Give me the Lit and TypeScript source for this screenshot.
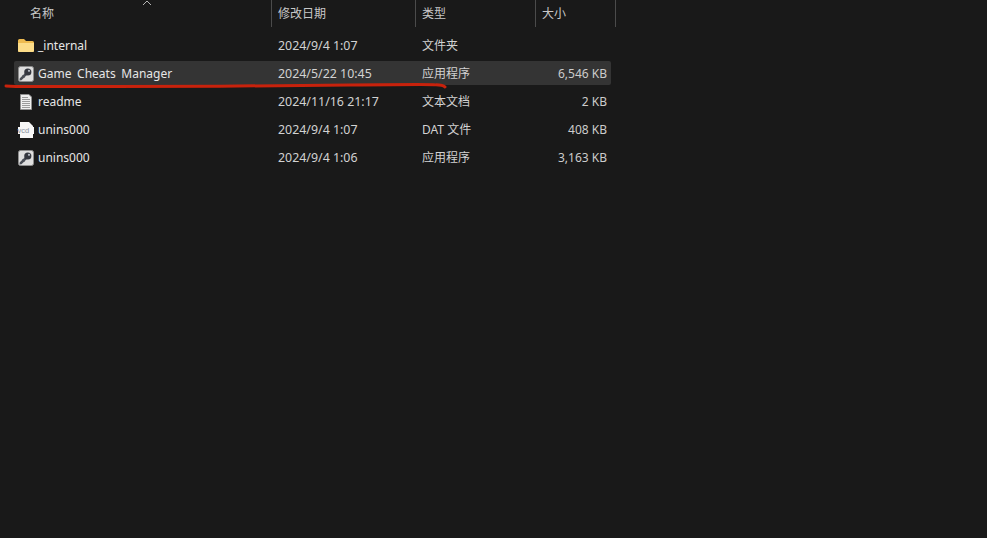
import { LitElement, css, html, svg } from "lit";
import { customElement } from "lit/decorators.js";

type Kind = "folder" | "app" | "text" | "dat";

interface FileRow {
  name: string;
  date: string;
  type: string;
  size: string;
  kind: Kind;
  selected?: boolean;
}

const rows: FileRow[] = [
  { name: "_internal", date: "2024/9/4 1:07", type: "文件夹", size: "", kind: "folder" },
  { name: "Game Cheats Manager", date: "2024/5/22 10:45", type: "应用程序", size: "6,546 KB", kind: "app", selected: true },
  { name: "readme", date: "2024/11/16 21:17", type: "文本文档", size: "2 KB", kind: "text" },
  { name: "unins000", date: "2024/9/4 1:07", type: "DAT 文件", size: "408 KB", kind: "dat" },
  { name: "unins000", date: "2024/9/4 1:06", type: "应用程序", size: "3,163 KB", kind: "app" },
];

const icons: Record<Kind, unknown> = {
  folder: svg`
    <path d="M1 3.5Q1 2 2.5 2H7L9 4H15.5Q17 4 17 5.5V13.5Q17 15 15.5 15H2.5Q1 15 1 13.5Z" fill="#eebb50"/>
    <path d="M1 6H17V13.5Q17 15 15.5 15H2.5Q1 15 1 13.5Z" fill="#fcdc88"/>`,
  app: svg`
    <rect x="1.5" y="1.5" width="15" height="15" rx="2" fill="#dedede" stroke="#8c8c8c"/>
    <path d="M3.8 14.2L9 9" stroke="#4a4e57" stroke-width="2.6" stroke-linecap="round"/>
    <path d="M5.5 10.5L7.5 12.5" stroke="#4a4e57" stroke-width="1.4"/>
    <circle cx="10.8" cy="7" r="3.6" fill="#34373f"/>
    <circle cx="12" cy="5.8" r="1.1" fill="#b9bec7"/>`,
  text: svg`
    <path d="M3.5 1.5H12L14.5 4V16.5H3.5Z" fill="#efefef" stroke="#8f8f8f"/>
    <path d="M5 4.5H11M5 6.5H13M5 8.5H13M5 10.5H13M5 12.5H13M5 14.5H13" stroke="#9b9b9b"/>`,
  dat: svg`
    <path d="M3 1H12L16 5V17H3Z" fill="#f7f7f7"/>
    <rect x="1" y="6" width="16" height="7" fill="#f7f7f7"/>
    <text x="0.5" y="12" font-size="7.5" font-family="Liberation Sans, sans-serif" fill="#8a93a0">vcd</text>`,
};

@customElement("app-root")
export class AppRoot extends LitElement {
  static styles = css`
    :host {
      display: block;
      position: relative;
      width: 987px;
      height: 538px;
      overflow: hidden;
      background: #191919;
      font-family: "Noto Sans", "Noto Sans CJK SC", sans-serif;
      font-size: 12px;
      color: #e6e6e6;
    }

    .head {
      display: grid;
      grid-template-columns: 272px 144px 120px 80px;
      width: 616px;
      height: 26px;
      margin-bottom: 7px;
      color: #c8c8c8;
      line-height: 27px;
    }

    .head span {
      box-sizing: border-box;
      padding-left: 6px;
      border-right: 1px solid #4b4b4b;
      position: relative;
    }

    .head span:first-child {
      padding-left: 30px;
    }

    .chevron {
      position: absolute;
      left: 142px;
      top: 0;
    }

    .rows {
      display: flex;
      flex-direction: column;
      gap: 4px;
      width: 597px;
      margin-left: 14px;
    }

    .row {
      display: grid;
      grid-template-columns: 24px 240px 144px 113px 72px;
      height: 24px;
      line-height: 25px;
      align-items: center;
      border-radius: 2px;
    }

    .row.selected {
      background: #343434;
    }

    .row svg {
      width: 18px;
      height: 18px;
      margin-left: 3px;
      display: block;
    }

    .name {
      word-spacing: 2.5px;
    }

    .date {
      font-size: 12.4px;
    }

    .size {
      text-align: right;
      color: #cccccc;
    }

    .date,
    .type {
      color: #d2d2d2;
    }

    .stroke {
      position: absolute;
      left: 0;
      top: 78px;
    }
  `;

  render() {
    return html`
      <div class="head">
        <span>名称
          <svg class="chevron" width="10" height="6" viewBox="0 0 10 6" fill="none" stroke="#b5b5b5"><path d="M1 5L5 1L9 5"/></svg>
        </span>
        <span>修改日期</span>
        <span>类型</span>
        <span>大小</span>
      </div>
      <div class="rows">
        ${rows.map(
          (r) => html`
            <div class="row ${r.selected ? "selected" : ""}">
              <svg viewBox="0 0 18 18">${icons[r.kind]}</svg>
              <div class="name">${r.name}</div>
              <div class="date">${r.date}</div>
              <div class="type">${r.type}</div>
              <div class="size">${r.size}</div>
            </div>
          `,
        )}
      </div>
      <svg class="stroke" width="460" height="14" viewBox="0 0 460 14" fill="none">
        <path
          d="M6 8Q14 8.5 30 8.6T110 8.6T220 8.2T350 7T436 6.8Q443 6.8 445 9"
          stroke="#c8220c"
          stroke-width="3"
          stroke-linecap="round"
        />
      </svg>
    `;
  }
}
